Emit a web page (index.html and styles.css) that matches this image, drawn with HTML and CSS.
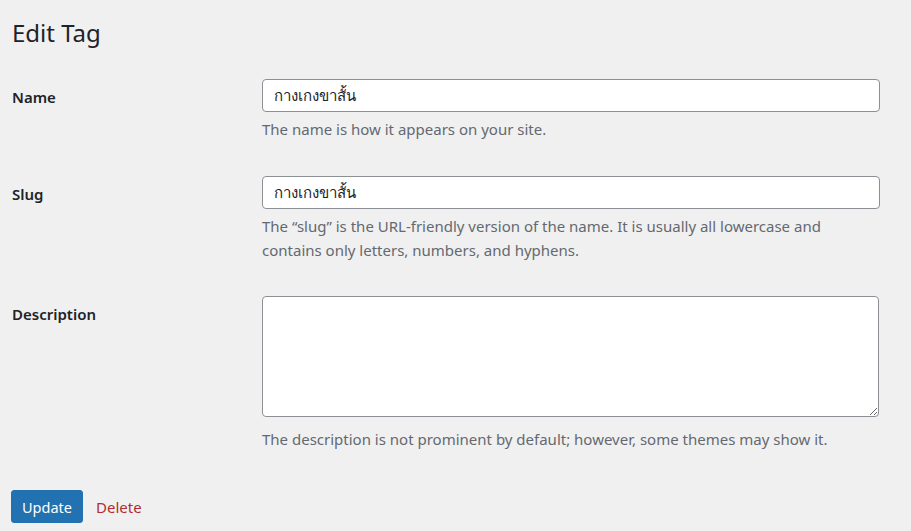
FILE: index.html
```html
<!DOCTYPE html>
<html lang="en">
<head>
<meta charset="utf-8">
<title>Edit Tag</title>
<link rel="stylesheet" href="styles.css">
</head>
<body>
<div class="wrap">
  <h1 class="title">Edit Tag</h1>
  <form class="form">
    <div class="row row-name">
      <label class="label" for="name">Name</label>
      <div class="field">
        <input class="input" id="name" type="text" value="กางเกงขาสั้น">
        <p class="desc">The name is how it appears on your site.</p>
      </div>
    </div>
    <div class="row row-slug">
      <label class="label" for="slug">Slug</label>
      <div class="field">
        <input class="input" id="slug" type="text" value="กางเกงขาสั้น">
        <p class="desc">The “slug” is the URL-friendly version of the name. It is usually all lowercase and contains only letters, numbers, and hyphens.</p>
      </div>
    </div>
    <div class="row row-desc">
      <label class="label" for="description">Description</label>
      <div class="field">
        <textarea class="textarea" id="description"></textarea>
        <p class="desc">The description is not prominent by default; however, some themes may show it.</p>
      </div>
    </div>
    <div class="actions">
      <button class="btn" type="button">Update</button>
      <a class="delete" href="#">Delete</a>
    </div>
  </form>
</div>
</body>
</html>
```
FILE: styles.css
```css
html, body {
  margin: 0;
  padding: 0;
  background: #f0f0f1;
}
body {
  font-family: "Noto Sans", "Open Sans", sans-serif;
  font-size: 15px;
  color: #1d2327;
}
.wrap {
  padding: 16px 0 0 12px;
}
.title {
  margin: 0;
  font-size: 24px;
  font-weight: 400;
  line-height: 34px;
  color: #1d2327;
}
.form {
  margin-top: 29px;
}
.row {
  display: grid;
  grid-template-columns: 250px 618px;
}
.row-name { margin-bottom: 35px; }
.row-slug { margin-bottom: 34px; }
.row-desc { margin-bottom: 39px; }
.label {
  font-weight: 600;
  line-height: 20px;
  padding-top: 8px;
}
.field {
  display: flex;
  flex-direction: column;
}
.input {
  box-sizing: border-box;
  height: 33px;
  width: 618px;
  border: 1px solid #8c8f94;
  border-radius: 4px;
  background: #fff;
  padding: 0 11px;
  font: inherit;
  font-size: 15px;
  color: #1d2327;
  margin: 0;
}
.textarea {
  box-sizing: border-box;
  width: 617px;
  height: 121px;
  border: 1px solid #8c8f94;
  border-radius: 4px;
  background: #fff;
  margin: 0;
  resize: vertical;
}
.desc {
  margin: 5px 0 0;
  color: #646970;
  line-height: 24px;
  max-width: 600px;
}
.row-desc .desc { margin-top: 10px; }
.actions {
  display: flex;
  align-items: center;
  gap: 13px;
  margin-left: -1px;
}
.btn {
  height: 33px;
  padding: 0 10px;
  background: #2271b1;
  color: #fff;
  border: 1px solid #2271b1;
  border-radius: 3px;
  font: inherit;
  font-size: 14.5px;
}
.delete {
  color: #b32d2e;
  text-decoration: none;
}
```
